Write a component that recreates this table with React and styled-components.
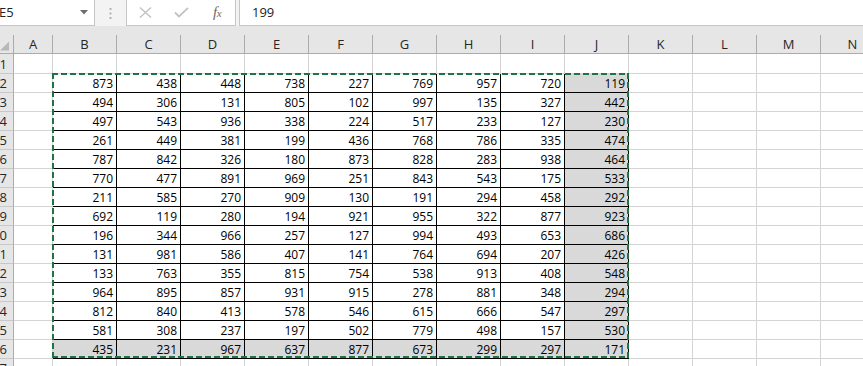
import React from 'react';
import styled, { createGlobalStyle } from 'styled-components';

const GlobalStyle = createGlobalStyle`
  html, body { margin: 0; padding: 0; background: #fff; overflow: hidden; }
  body { font-family: "Open Sans", "Liberation Sans", sans-serif; }
`;

const Page = styled.div`
  width: 863px;
  height: 366px;
  overflow: hidden;
  background: #e6e6e6;
  display: flex;
  flex-direction: column;
`;

const FormulaBar = styled.div`
  flex: none;
  height: 26px;
  display: flex;
  background: #f3f3f3;
`;

const NameBox = styled.div`
  box-sizing: border-box;
  width: 95px;
  height: 26px;
  background: #fff;
  border-right: 1px solid #c6c6c6;
  border-bottom: 1px solid #c6c6c6;
  display: flex;
  align-items: center;
  justify-content: space-between;
  padding: 0 6px 1px 0;
  font-size: 13px;
  color: #222;
`;

const NameText = styled.span`
  margin-left: -1px;
`;

const Grip = styled.div`
  width: 30px;
  display: flex;
  align-items: center;
  justify-content: center;
  padding-right: 1px;
`;

const ButtonBox = styled.div`
  box-sizing: border-box;
  width: 110px;
  height: 26px;
  background: #fff;
  border-left: 1px solid #c6c6c6;
  border-right: 1px solid #c6c6c6;
  border-bottom: 1px solid #c6c6c6;
  display: grid;
  grid-template-columns: repeat(3, 36px);
`;

const IconSlot = styled.div`
  display: flex;
  align-items: center;
  justify-content: center;
  padding-bottom: 1px;
`;

const Fx = styled.span`
  font-family: "Liberation Serif", "DejaVu Serif", serif;
  font-style: italic;
  font-size: 15px;
  color: #6a6a6a;
  letter-spacing: -0.5px;
  line-height: 1;
  & > small {
    font-size: 11px;
  }
`;

const Spacer = styled.div`
  width: 3px;
`;

const Input = styled.div`
  box-sizing: border-box;
  flex: 1;
  height: 26px;
  background: #fff;
  border-left: 1px solid #c6c6c6;
  border-bottom: 1px solid #c6c6c6;
  display: flex;
  align-items: center;
  padding: 0 0 1px 12px;
  font-size: 13px;
  color: #222;
`;

const Sheet = styled.div`
  flex: none;
  display: grid;
  grid-template-columns: 14px 39px repeat(13, 64px);
  grid-template-rows: 28px 20px repeat(16, 19px);
`;

const Corner = styled.div`
  grid-row: 1;
  grid-column: 1;
  box-sizing: border-box;
  align-self: end;
  height: 19px;
  border-right: 1px solid #ababab;
  border-bottom: 1px solid #ababab;
  display: flex;
  align-items: flex-end;
  justify-content: flex-end;
  padding: 0 4px 2px 0;
`;

const ColHead = styled.div`
  grid-row: 1;
  grid-column: ${(p) => p.$c};
  box-sizing: border-box;
  align-self: end;
  height: 19px;
  border-right: 1px solid #ababab;
  border-bottom: 1px solid #ababab;
  display: flex;
  align-items: center;
  justify-content: center;
  font-size: 13px;
  color: #262626;
  padding-bottom: 1px;
`;

const RowHead = styled.div`
  grid-row: ${(p) => p.$r};
  grid-column: 1;
  box-sizing: border-box;
  border-right: 1px solid #ababab;
  border-bottom: 1px solid #c8c8c8;
  background: #e6e6e6;
  display: flex;
  align-items: center;
  justify-content: flex-end;
  padding-right: 6px;
  overflow: hidden;
  white-space: nowrap;
  font-size: 13px;
  color: #262626;
`;

const Cell = styled.div`
  grid-row: ${(p) => p.$r};
  grid-column: ${(p) => p.$c};
  box-sizing: border-box;
  border-right: 1px solid ${(p) => (p.$data ? '#000' : '#d4d4d4')};
  border-bottom: 1px solid ${(p) => (p.$data ? '#000' : '#d4d4d4')};
  background: ${(p) => (p.$fill ? '#d9d9d9' : '#fff')};
  display: flex;
  align-items: center;
  justify-content: flex-end;
  padding-right: 3px;
  font-size: 12px;
  color: #000;
  overflow: hidden;
  white-space: nowrap;
`;

const Marquee = styled.div`
  grid-column: 3 / 12;
  grid-row: 3 / 18;
  margin: -1px 0 1px -1px;
  z-index: 2;
  pointer-events: none;
  background:
    repeating-linear-gradient(90deg, #217346 0 6px, transparent 6px 9px) left top / 100% 2px no-repeat,
    repeating-linear-gradient(90deg, #217346 0 6px, transparent 6px 9px) left bottom / 100% 2px no-repeat,
    repeating-linear-gradient(180deg, #217346 0 6px, transparent 6px 9px) left top / 2px 100% no-repeat,
    repeating-linear-gradient(180deg, #217346 0 6px, transparent 6px 9px) right top / 2px 100% no-repeat;
`;

const COLS = ['A', 'B', 'C', 'D', 'E', 'F', 'G', 'H', 'I', 'J', 'K', 'L', 'M', 'N'];

const DATA = [
  [873, 438, 448, 738, 227, 769, 957, 720, 119],
  [494, 306, 131, 805, 102, 997, 135, 327, 442],
  [497, 543, 936, 338, 224, 517, 233, 127, 230],
  [261, 449, 381, 199, 436, 768, 786, 335, 474],
  [787, 842, 326, 180, 873, 828, 283, 938, 464],
  [770, 477, 891, 969, 251, 843, 543, 175, 533],
  [211, 585, 270, 909, 130, 191, 294, 458, 292],
  [692, 119, 280, 194, 921, 955, 322, 877, 923],
  [196, 344, 966, 257, 127, 994, 493, 653, 686],
  [131, 981, 586, 407, 141, 764, 694, 207, 426],
  [133, 763, 355, 815, 754, 538, 913, 408, 548],
  [964, 895, 857, 931, 915, 278, 881, 348, 294],
  [812, 840, 413, 578, 546, 615, 666, 547, 297],
  [581, 308, 237, 197, 502, 779, 498, 157, 530],
  [435, 231, 967, 637, 877, 673, 299, 297, 171],
];

function cellValue(row, colIdx) {
  if (row >= 2 && row <= 16 && colIdx >= 1 && colIdx <= 9) {
    return DATA[row - 2][colIdx - 1];
  }
  return null;
}

export default function App() {
  const rows = [];
  for (let r = 1; r <= 17; r++) {
    rows.push(
      <RowHead key={`h${r}`} $r={r + 1}>{r}</RowHead>
    );
    COLS.forEach((c, i) => {
      const v = cellValue(r, i);
      const data = v !== null;
      const fill = data && (i === 9 || r === 16);
      rows.push(
        <Cell key={`${c}${r}`} $r={r + 1} $c={i + 2} $data={data} $fill={fill}>
          {v}
        </Cell>
      );
    });
  }

  return (
    <Page>
      <GlobalStyle />
      <FormulaBar>
        <NameBox>
          <NameText>E5</NameText>
          <svg width="8" height="5" viewBox="0 0 8 5">
            <path d="M0 0 H8 L4 4.5 Z" fill="#6f6f6f" />
          </svg>
        </NameBox>
        <Grip>
          <svg width="3" height="11" viewBox="0 0 3 11">
            <rect x="0.5" y="0" width="2" height="2" fill="#b3b3b3" />
            <rect x="0.5" y="4.5" width="2" height="2" fill="#b3b3b3" />
            <rect x="0.5" y="9" width="2" height="2" fill="#b3b3b3" />
          </svg>
        </Grip>
        <ButtonBox>
          <IconSlot>
            <svg width="13" height="11" viewBox="0 0 13 11">
              <path d="M1 0.5 L12 10.5 M12 0.5 L1 10.5" stroke="#c2c2c2" strokeWidth="1.4" fill="none" />
            </svg>
          </IconSlot>
          <IconSlot>
            <svg width="15" height="11" viewBox="0 0 15 11">
              <path d="M1 5.5 L5 9.5 L14 0.8" stroke="#c2c2c2" strokeWidth="1.8" fill="none" />
            </svg>
          </IconSlot>
          <IconSlot>
            <Fx>f<small>x</small></Fx>
          </IconSlot>
        </ButtonBox>
        <Spacer />
        <Input>199</Input>
      </FormulaBar>
      <Sheet>
        <Corner>
          <svg width="10" height="10" viewBox="0 0 10 10">
            <path d="M10 0 V10 H0 Z" fill="#b8b8b8" />
          </svg>
        </Corner>
        {COLS.map((c, i) => (
          <ColHead key={c} $c={i + 2}>{c}</ColHead>
        ))}
        {rows}
        <Marquee />
      </Sheet>
    </Page>
  );
}
